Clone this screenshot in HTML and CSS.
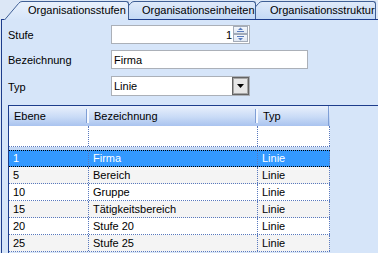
FILE: index.html
```html
<!DOCTYPE html>
<html lang="de">
<head>
    <meta charset="UTF-8">
    <title>Organisationsstufen</title>
    <link rel="stylesheet" href="styles.css">
</head>
<body>
<div class="tabs">
    <div class="tab tab-1 active">
        <svg class="slant" viewBox="0 0 18 19" width="18" height="19">
            <defs>
                <linearGradient id="ga" x1="0" y1="0" x2="0" y2="1">
                    <stop offset="0" stop-color="#e9f1fc"/>
                    <stop offset="1" stop-color="#d6e5f9"/>
                </linearGradient>
            </defs>
            <polygon points="0,19 14,2 18,0 18,19" fill="url(#ga)"/>
            <path d="M0.5 19 L14.5 2.5 Q16 0.5 18 0.5" fill="none" stroke="#3f5f95"/>
        </svg>
        <span class="tab-label">Organisationsstufen</span>
    </div>
    <div class="tab tab-2">
        <svg class="slant" viewBox="0 0 18 18" width="18" height="18">
            <defs>
                <linearGradient id="gb" x1="0" y1="0" x2="0" y2="1">
                    <stop offset="0" stop-color="#dfeafa"/>
                    <stop offset="1" stop-color="#c4d9f5"/>
                </linearGradient>
            </defs>
            <polygon points="0,18 14,2 18,0 18,18" fill="url(#gb)"/>
            <path d="M0.5 18 L14.5 2.5 Q16 0.5 18 0.5" fill="none" stroke="#3f5f95"/>
        </svg>
        <span class="tab-label">Organisationseinheiten</span>
    </div>
    <div class="tab tab-3">
        <svg class="slant" viewBox="0 0 18 18" width="18" height="18">
            <defs>
                <linearGradient id="gc" x1="0" y1="0" x2="0" y2="1">
                    <stop offset="0" stop-color="#dfeafa"/>
                    <stop offset="1" stop-color="#c4d9f5"/>
                </linearGradient>
            </defs>
            <polygon points="0,18 14,2 18,0 18,18" fill="url(#gc)"/>
            <path d="M0.5 18 L14.5 2.5 Q16 0.5 18 0.5" fill="none" stroke="#3f5f95"/>
        </svg>
        <span class="tab-label">Organisationsstruktur</span>
    </div>
</div>

<div class="panel">
    <div class="field">
        <label class="caption">Stufe</label>
        <div class="box spin">
            <span class="spin-value">1</span>
            <div class="spin-buttons">
                <span class="spin-btn">
                    <svg width="13" height="6" viewBox="0 0 13 6"><polygon points="4,3 6.5,0.5 9,3" fill="#5a7cbd"/><rect x="3" y="4" width="7" height="1" fill="#5a7cbd"/></svg>
                </span>
                <span class="spin-btn">
                    <svg width="13" height="6" viewBox="0 0 13 6"><rect x="3" y="1" width="7" height="1" fill="#5a7cbd"/><polygon points="4,3 9,3 6.5,5.5" fill="#5a7cbd"/></svg>
                </span>
            </div>
        </div>
    </div>
    <div class="field">
        <label class="caption">Bezeichnung</label>
        <div class="box text-box">Firma</div>
    </div>
    <div class="field field-typ">
        <label class="caption">Typ</label>
        <div class="box combo">
            <span class="combo-value">Linie</span>
            <span class="combo-btn">
                <svg width="7" height="4" viewBox="0 0 7 4"><polygon points="0,0 7,0 3.5,4" fill="#000"/></svg>
            </span>
        </div>
    </div>

    <div class="grid">
        <div class="grid-cols">
            <div class="grid-row head">
                <div class="cell c1">Ebene</div>
                <div class="cell c2">Bezeichnung</div>
                <div class="cell c3">Typ</div>
            </div>
            <div class="grid-row add-row">
                <div class="cell c1"></div>
                <div class="cell c2"></div>
                <div class="cell c3"></div>
            </div>
            <div class="add-sep"></div>
            <div class="grid-row data selected">
                <div class="cell c1">1</div>
                <div class="cell c2">Firma</div>
                <div class="cell c3">Linie</div>
            </div>
            <div class="grid-row data alt">
                <div class="cell c1">5</div>
                <div class="cell c2">Bereich</div>
                <div class="cell c3">Linie</div>
            </div>
            <div class="grid-row data">
                <div class="cell c1">10</div>
                <div class="cell c2">Gruppe</div>
                <div class="cell c3">Linie</div>
            </div>
            <div class="grid-row data alt">
                <div class="cell c1">15</div>
                <div class="cell c2">Tätigkeitsbereich</div>
                <div class="cell c3">Linie</div>
            </div>
            <div class="grid-row data">
                <div class="cell c1">20</div>
                <div class="cell c2">Stufe 20</div>
                <div class="cell c3">Linie</div>
            </div>
            <div class="grid-row data alt">
                <div class="cell c1">25</div>
                <div class="cell c2">Stufe 25</div>
                <div class="cell c3">Linie</div>
            </div>
        </div>
    </div>
</div>
</body>
</html>
```

FILE: styles.css
```css
* {
    margin: 0;
    padding: 0;
    box-sizing: border-box;
}

body {
    width: 378px;
    height: 253px;
    overflow: hidden;
    background: #dce7f6;
    font-family: "Liberation Sans", Arial, sans-serif;
    font-size: 11px;
    color: #000;
}

/* Reiter */
.tabs {
    display: flex;
    align-items: flex-start;
    height: 19px;
    padding: 1px 0 0 4px;
    position: relative;
    z-index: 2;
}

.tab {
    display: flex;
    height: 18px;
    position: relative;
}

.tab.active {
    height: 19px;
    z-index: 3;
}

.tab-2 {
    margin-left: -13px;
    z-index: 2;
}

.tab-3 {
    margin-left: -12px;
    z-index: 1;
}

.slant {
    display: block;
    flex: none;
}

.tab-label {
    display: block;
    border-top: 1px solid #3f5f95;
    border-right: 1px solid #3f5f95;
    border-top-right-radius: 3px;
    background: linear-gradient(#dfeafa, #c4d9f5);
    line-height: 16px;
    padding-left: 8px;
    white-space: nowrap;
}

.tab-1 .tab-label {
    width: 107px;
    padding-left: 6px;
    background: linear-gradient(#e9f1fc, #d6e5f9);
}

.tab-2 .tab-label {
    width: 122px;
}

.tab-3 .tab-label {
    width: 114px;
}

/* Registerseite */
.panel {
    margin-left: 1px;
    height: 234px;
    border-top: 1px solid #1d3d8c;
    border-left: 1px solid #1d3d8c;
    background: #d6e5f9;
    padding: 5px 0 0 6px;
}

.field {
    display: flex;
    align-items: center;
    height: 19px;
}

.field + .field {
    margin-top: 6px;
}

.field-typ {
    height: 20px;
}

.field + .field-typ {
    margin-top: 7px;
}

.caption {
    width: 103px;
    padding-top: 1px;
}

.box {
    height: 100%;
    border: 1px solid #abb0b8;
    background: #fff;
    display: flex;
    align-items: center;
}

.spin {
    width: 139px;
}

.spin-value {
    flex: 1;
    text-align: right;
    padding-right: 1px;
}

.spin-buttons {
    display: flex;
    flex-direction: column;
    align-self: flex-start;
    width: 16px;
    padding-right: 1px;
}

.spin-btn {
    height: 8px;
    border: 1px solid #a3abb8;
    background: linear-gradient(#f4f7fc, #dfe7f3);
    display: flex;
    align-items: center;
    justify-content: center;
}

.spin-btn + .spin-btn {
    margin-top: 0;
}

.spin-btn svg {
    display: block;
}

.text-box {
    width: 197px;
    padding-left: 2px;
}

.combo {
    width: 139px;
}

.combo-value {
    flex: 1;
    padding-left: 2px;
}

.combo-btn {
    width: 17px;
    height: 18px;
    border: 1px solid #646464;
    box-shadow: inset 1px 1px 0 #a6a6a6, inset -1px -1px 0 #a6a6a6;
    background: #e6e6e6;
    display: flex;
    align-items: center;
    justify-content: center;
}

.combo-btn svg {
    display: block;
}

/* Tabelle */
.grid {
    margin-top: 9px;
    border-top: 1px solid #1d3d8c;
    border-left: 1px solid #1d3d8c;
    height: 150px;
}

.grid-cols {
    width: 321px;
}

.grid-row {
    display: flex;
}

.cell {
    padding-left: 4px;
    border-right: 1px dotted #5878bd;
    white-space: nowrap;
}

.c1 {
    width: 80px;
}

.c2 {
    width: 169px;
}

.c3 {
    width: 72px;
}

.head {
    height: 20px;
    background: linear-gradient(#e9f0fc, #c9dbf6 55%, #a9c3ef);
}

.head .cell {
    line-height: 20px;
    border-right: none;
    position: relative;
    padding-left: 5px;
}

.head .cell::after {
    content: "";
    position: absolute;
    right: 0;
    top: 3px;
    bottom: 3px;
    width: 2px;
    border-left: 1px solid #7f9fd6;
    background: #f4f8ff;
}

.head .c3::after {
    top: 0;
    bottom: 0;
    width: 1px;
    background: none;
}

.add-row {
    height: 21px;
    background: #fff;
    border-bottom: 1px dotted #5878bd;
}

.add-sep {
    height: 3px;
    background: #c3d7f4;
}

.data {
    height: 17px;
    background: #fff;
    border-bottom: 1px dotted #5878bd;
    line-height: 16px;
}

.data.alt {
    background: #f4f4f4;
}

.data.selected {
    background: #3399ff;
    color: #fff;
    border-top: 1px dotted #000;
    border-bottom: 1px dotted #000;
    line-height: 15px;
}
```
